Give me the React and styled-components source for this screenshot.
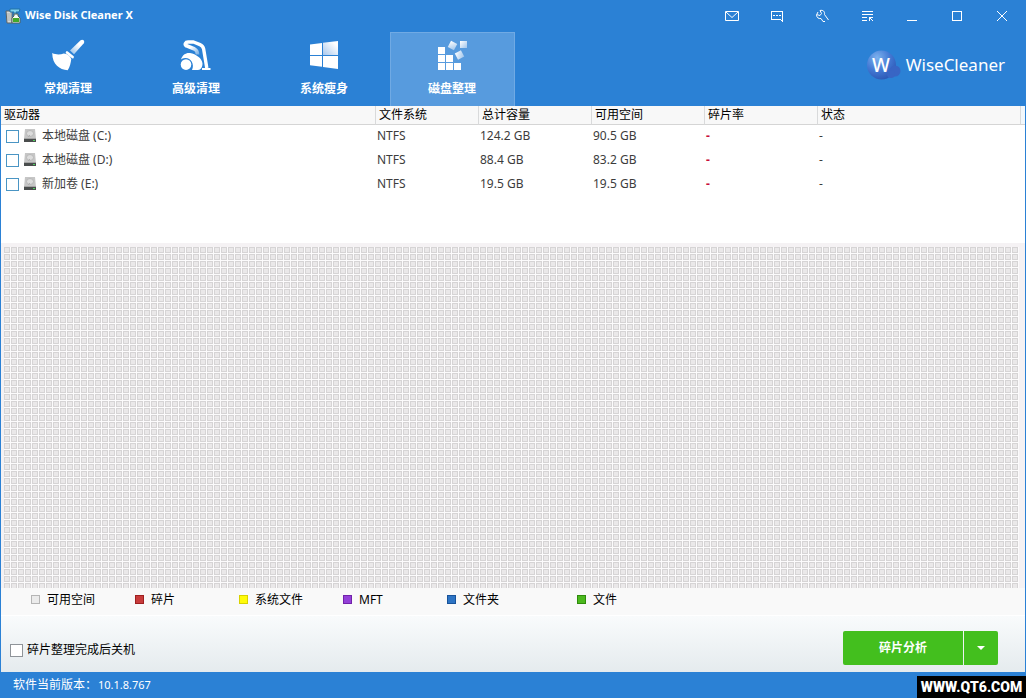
import React, { useState } from "react";
import styled, { createGlobalStyle, css } from "styled-components";

const GlobalStyle = createGlobalStyle`
  *,
  *::before {
    box-sizing: border-box;
  }

  body {
    margin: 0;
    font-family: "Noto Sans", "Noto Sans CJK SC", sans-serif;
    font-size: 12px;
    line-height: 18px;
    color: #000;
  }

  button,
  input {
    font: inherit;
    margin: 0;
  }
`;

const Window = styled.div`
  display: flex;
  flex-direction: column;
  min-height: 100vh;
  background: #2b81d5;
`;

const TitleBar = styled.header`
  display: flex;
  align-items: center;
  height: 32px;
  padding: 0 2px 0 5px;
  color: #fff;
`;

const Title = styled.h1`
  flex: 1;
  margin: 0 0 2px 4px;
  font-size: 11px;
  font-weight: 700;
`;

const TitleButton = styled.button`
  display: flex;
  align-items: center;
  justify-content: center;
  width: 45px;
  height: 32px;
  padding: 0;
  border: 0;
  background: transparent;
`;

const LineIcon = styled.svg`
  width: 16px;
  height: 16px;
  fill: none;
  stroke: #fff;
  shape-rendering: ${(props) => (props.$smooth ? "auto" : "crispEdges")};
`;

const NavBar = styled.nav`
  display: flex;
  gap: 3px;
  height: 74px;
  padding: 0 21px 0 6px;
`;

const NavButton = styled.button`
  display: flex;
  flex-direction: column;
  align-items: center;
  gap: 8px;
  width: 125px;
  padding: 5px 1px 0 0;
  border: 1px solid transparent;
  border-bottom: 0;
  background: transparent;
  color: #fff;
  font-weight: 700;

  svg {
    width: 34px;
    height: 34px;
    fill: #fff;
  }

  ${(props) =>
    props.$active &&
    css`
      background: #579bde;
      border-color: #70aae4;
    `}
`;

const Brand = styled.a`
  display: flex;
  align-items: center;
  gap: 4px;
  height: 66px;
  margin-left: auto;
  color: #fff;
  font-size: 17px;
  text-decoration: none;
`;

const Content = styled.main`
  display: flex;
  flex: 1;
  flex-direction: column;
  margin: 0 1px;
  background: #f9f9f9;
`;

const DriveList = styled.div`
  min-height: 137px;
  background: #fff;
`;

const DriveTable = styled.table`
  width: 100%;
  table-layout: fixed;
  border-collapse: separate;
  border-spacing: 0;
`;

const HeadCell = styled.th`
  width: ${(props) => props.$width || "auto"};
  height: 19px;
  padding: 0 3px;
  border-right: 1px solid #d9dadb;
  border-bottom: 1px solid #d5d5d5;
  background: #f8f8f8;
  font-weight: 400;
  text-align: left;

  &:last-child {
    padding: 0;
    border-right: 0;
    background: #f2f8fc;
  }
`;

const Cell = styled.td`
  height: 24px;
  padding: 0 1px 2px;
  color: ${(props) => (props.$alert ? "#c8103c" : "#3c3c3c")};
  font-weight: ${(props) => (props.$alert ? 700 : 400)};
`;

const DriveLabel = styled.label`
  display: flex;
  align-items: center;
  gap: 5px;
  padding-left: 4px;
`;

const CheckBox = styled.input`
  appearance: none;
  flex: none;
  width: 13px;
  height: 13px;
  border: 1px solid ${(props) => props.$tone || "#4a95c4"};
  background: #fff;

  &:checked {
    background: #2b81d5;
    box-shadow: inset 0 0 0 2px #fff;
  }
`;

const MapArea = styled.section`
  display: flex;
  flex: 1;
  padding: 4px 6px 0 3px;
  background: #f5f2f4;
`;

const ClusterMap = styled.div`
  flex: 1;
  background-color: #eae8e9;
  background-image: linear-gradient(to right, transparent 6px, #fcfbfc 6px),
    linear-gradient(to bottom, transparent 6px, #fcfbfc 6px),
    linear-gradient(
      to right,
      #d6d4d5 1px,
      transparent 1px,
      transparent 5px,
      #d6d4d5 5px
    ),
    linear-gradient(
      to bottom,
      #d6d4d5 1px,
      transparent 1px,
      transparent 5px,
      #d6d4d5 5px
    );
  background-size: 7px 7px;
`;

const Legend = styled.ul`
  display: flex;
  height: 27px;
  margin: 0;
  padding: 3px 0 0 30px;
  list-style: none;
`;

const LegendItem = styled.li`
  display: flex;
  gap: 7px;
  width: ${(props) => (props.$wide ? "130px" : "104px")};

  &::before {
    content: "";
    width: 9px;
    height: 9px;
    margin-top: 4px;
    border: 1px solid ${(props) => props.$edge};
    background: ${(props) => props.$fill};
  }
`;

const Footer = styled.footer`
  display: flex;
  align-items: center;
  justify-content: space-between;
  height: 57px;
  padding: 8px 27px 0 9px;
  border-top: 1px solid #fff;
  background: linear-gradient(#f9fbfc, #e5ebee);
`;

const OptionLabel = styled.label`
  display: flex;
  align-items: center;
  gap: 4px;
  margin-top: 4px;
`;

const ActionGroup = styled.div`
  display: flex;
  gap: 1px;
`;

const ActionButton = styled.button`
  display: flex;
  align-items: center;
  justify-content: center;
  width: ${(props) => (props.$narrow ? "34px" : "120px")};
  height: 34px;
  padding: 0;
  border: 0;
  border-radius: ${(props) => (props.$narrow ? "0 2px 2px 0" : "2px 0 0 2px")};
  background: #43bf1e;
  color: #fff;
  font-weight: 700;
`;

const StatusBar = styled.div`
  position: relative;
  display: flex;
  align-items: center;
  height: 26px;
  padding-left: 13px;
  color: #fff;
`;

const Version = styled.span`
  margin-left: 1px;
  font-size: 11px;
`;

const Watermark = styled.span`
  position: absolute;
  right: 0;
  bottom: 0;
  width: 109px;
  height: 22px;
  background: #000;
  font-family: Roboto, sans-serif;
  font-size: 14px;
  font-weight: 900;
  line-height: 22px;
  text-align: center;
`;

const AppIcon = () => (
  <svg width="16" height="16" viewBox="0 0 16 16">
    <path d="M1 3h6v12H2z" fill="#d6d9d8" stroke="#5c6467" />
    <path d="M3 5v8M5 5v8" stroke="#aab0ae" />
    <path d="M5 1h10l-1 3h-3v3H9V4H5z" fill="#7fd2ee" stroke="#2373a5" />
    <path d="M9 6h4v2l2 2v5H7v-5l2-2z" fill="#f4fbf1" stroke="#53635b" />
    <path d="M8 10h6v4H8z" fill="#42a829" />
  </svg>
);

const BroomIcon = () => (
  <svg viewBox="0 0 34 34">
    <defs>
      <linearGradient id="handle" x1="1" y1="0" x2="0" y2="1">
        <stop offset="0.35" stopColor="#fff" />
        <stop offset="1" stopColor="#8fbdea" />
      </linearGradient>
    </defs>
    <path
      d="M29.6 2.200c2.200-1.600 4.600.6 3.200 3L23 16.200l-4-3.700z"
      fill="url(#handle)"
    />
    <path d="M16 14.500l5.600 4.600" stroke="#fff" strokeWidth="2.6" strokeLinecap="round" />
    <path d="M1.200 15c4 2 8 1.700 11.600.5 3.600.4 6.500 2.600 7.500 5.400-.6 4-1.400 8-3.600 11.300C8.500 31.500 1.500 27 1.200 15z" />
  </svg>
);

const VacuumIcon = () => (
  <svg viewBox="0 0 34 34">
    <defs>
      <linearGradient id="hose" x1="0" y1="0" x2="1" y2="1">
        <stop offset="0.3" stopColor="#fff" />
        <stop offset="1" stopColor="#7db2e6" />
      </linearGradient>
    </defs>
    <path
      d="M7 7.500l8.500 3.500q3 1.500 3 5.500"
      fill="none"
      stroke="url(#hose)"
      strokeWidth="3.6"
    />
    <path
      d="M7.500 8C5 6.500 6.500 4 9 4h5.500l6.500 2.600q3 1.200 3.600 4.200L27.800 30"
      fill="none"
      stroke="#fff"
      strokeWidth="3.4"
      strokeLinejoin="round"
    />
    <path d="M23 30h8.500v2H23z" />
    <path d="M2 21.500C3.500 16.500 7 14.500 11 15c6 1.200 12 5 12.500 10.500 0 3.500-1.500 6.500-4.500 6.500h-6c3-6-1.500-12.500-7-12-2 .2-3 .8-4 1.500z" />
    <circle cx="7" cy="26.600" r="5.300" />
  </svg>
);

const WindowsIcon = () => (
  <svg viewBox="0 0 34 34">
    <defs>
      <linearGradient id="pane" x1="1" y1="0" x2="0" y2="1">
        <stop offset="0.2" stopColor="#fff" />
        <stop offset="1" stopColor="#a9c8ed" />
      </linearGradient>
    </defs>
    <path d="M3 6.600L15 5v12H3z" />
    <path d="M16 4.800L31 3v14H16z" fill="url(#pane)" />
    <path d="M3 18h12v10.800L3 27.200zM16 18h15v13l-15-2z" />
  </svg>
);

const DefragIcon = () => (
  <svg viewBox="0 0 34 34">
    <defs>
      <linearGradient id="block" x1="0" y1="0" x2="1" y2="1">
        <stop offset="0" stopColor="#fff" />
        <stop offset="1" stopColor="#9fc5ec" />
      </linearGradient>
    </defs>
    <path d="M3 9h7v7H3zM3 17h7v7H3zM11 17h7v7h-7zM3 25h7v7H3zM11 25h7v7h-7zM19 25h7v7h-7z" />
    <g fill="url(#block)">
      <path d="M25 3h7v7h-7z" />
      <path d="M14 4h7v7h-7z" transform="rotate(28 17.500 7.500)" />
      <path d="M21 13.500h7v7h-7z" transform="rotate(-28 24.500 17)" />
    </g>
  </svg>
);

const BrandIcon = () => (
  <svg width="36" height="32" viewBox="0 0 36 32">
    <defs>
      <radialGradient id="ball" cx="0.350" cy="0.250" r="0.800">
        <stop offset="0" stopColor="#7cb2ee" />
        <stop offset="0.550" stopColor="#4379d4" />
        <stop offset="1" stopColor="#2b57b4" />
      </radialGradient>
    </defs>
    <circle cx="15.500" cy="16" r="14.500" fill="url(#ball)" />
    <circle cx="29" cy="22" r="5.500" fill="#3865c4" />
    <circle cx="25" cy="25" r="4" fill="#3865c4" />
    <text
      x="15"
      y="23"
      fill="#fff"
      fontFamily="Noto Sans, sans-serif"
      fontSize="19"
      fontWeight="500"
      textAnchor="middle"
    >
      W
    </text>
  </svg>
);

const DiskIcon = () => (
  <svg width="13" height="14" viewBox="0 0 13 14">
    <path d="M1 0h10l1 10H0z" fill="#c6c6c6" />
    <ellipse cx="6" cy="4.500" rx="3.500" ry="3" fill="#dcdcdc" stroke="#b8b8b8" />
    <path d="M4 8l2-2" stroke="#b0b0b0" />
    <path d="M0 9h12v1H0z" fill="#a5a5a5" />
    <path d="M0 10h12v3H0z" fill="#4a4d4d" />
    <path d="M9 11h2v1H9z" fill="#4fd05e" />
  </svg>
);

const titleButtons = [
  { label: "邮件", path: "M1.500 3.500h13v9h-13zM2 4l6 5.500L14 4", smooth: true },
  {
    label: "反馈",
    path: "M2.500 3.500h11v10l-2-2h-9zM4 7.500h2M7 7.500h2M10 7.500h2",
  },
  {
    label: "工具",
    path: "M6 2.500c3-.8 5 1 4.500 4l4 5.500M6 2.500l1.500 3L6 7.500l-3.500-1c0 3 2 4.500 4.500 4l2 3h2M3 6l1-2",
    smooth: true,
  },
  {
    label: "菜单",
    path: "M3 3.500h11M3 6.500h11M3 9.500h5M3 12.500h5M10 9.500h4M10.500 9v4M11 10l3 3",
  },
  { label: "最小化", path: "M3 12.500h10" },
  { label: "最大化", path: "M3.500 3.500h9v9h-9z" },
  { label: "关闭", path: "M3 3l10 10M13 3L3 13", smooth: true },
];

const tabs = [
  { label: "常规清理", Icon: BroomIcon },
  { label: "高级清理", Icon: VacuumIcon },
  { label: "系统瘦身", Icon: WindowsIcon },
  { label: "磁盘整理", Icon: DefragIcon },
];

const drives = [
  { name: "本地磁盘 (C:)", total: "124.2 GB", free: "90.5 GB" },
  { name: "本地磁盘 (D:)", total: "88.4 GB", free: "83.2 GB" },
  { name: "新加卷 (E:)", total: "19.5 GB", free: "19.5 GB" },
];

const legend = [
  { label: "可用空间", fill: "#ebebeb", edge: "#b5b5b5" },
  { label: "碎片", fill: "#c83c3c", edge: "#9e2020" },
  { label: "系统文件", fill: "#fffb0a", edge: "#d8d200" },
  { label: "MFT", fill: "#9440d8", edge: "#7222aa" },
  { label: "文件夹", fill: "#2d74c4", edge: "#18539a", wide: true },
  { label: "文件", fill: "#4cb91e", edge: "#2f8c0c" },
];

export default function App() {
  const [active, setActive] = useState("磁盘整理");

  return (
    <Window>
      <GlobalStyle />
      <TitleBar>
        <AppIcon />
        <Title>Wise Disk Cleaner X</Title>
        {titleButtons.map(({ label, path, smooth }) => (
          <TitleButton key={label} type="button" aria-label={label}>
            <LineIcon viewBox="0 0 16 16" $smooth={smooth}>
              <path d={path} />
            </LineIcon>
          </TitleButton>
        ))}
      </TitleBar>

      <NavBar>
        {tabs.map(({ label, Icon }) => (
          <NavButton
            key={label}
            type="button"
            $active={label === active}
            onClick={() => setActive(label)}
          >
            <Icon />
            {label}
          </NavButton>
        ))}
        <Brand href="#">
          <BrandIcon />
          WiseCleaner
        </Brand>
      </NavBar>

      <Content>
        <DriveList>
          <DriveTable>
            <thead>
              <tr>
                <HeadCell>驱动器</HeadCell>
                <HeadCell $width="103px">文件系统</HeadCell>
                <HeadCell $width="113px">总计容量</HeadCell>
                <HeadCell $width="113px">可用空间</HeadCell>
                <HeadCell $width="113px">碎片率</HeadCell>
                <HeadCell $width="203px">状态</HeadCell>
                <HeadCell $width="4px" />
              </tr>
            </thead>
            <tbody>
              {drives.map((drive) => (
                <tr key={drive.name}>
                  <Cell>
                    <DriveLabel>
                      <CheckBox type="checkbox" />
                      <DiskIcon />
                      {drive.name}
                    </DriveLabel>
                  </Cell>
                  <Cell>NTFS</Cell>
                  <Cell>{drive.total}</Cell>
                  <Cell>{drive.free}</Cell>
                  <Cell $alert>-</Cell>
                  <Cell>-</Cell>
                </tr>
              ))}
            </tbody>
          </DriveTable>
        </DriveList>

        <MapArea>
          <ClusterMap />
        </MapArea>

        <Legend>
          {legend.map(({ label, fill, edge, wide }) => (
            <LegendItem key={label} $fill={fill} $edge={edge} $wide={wide}>
              {label}
            </LegendItem>
          ))}
        </Legend>

        <Footer>
          <OptionLabel>
            <CheckBox type="checkbox" $tone="#8f9499" />
            碎片整理完成后关机
          </OptionLabel>
          <ActionGroup>
            <ActionButton type="button">碎片分析</ActionButton>
            <ActionButton type="button" $narrow aria-label="更多">
              <svg width="8" height="4" viewBox="0 0 8 4" fill="#fff">
                <path d="M0 0h8L4 4z" />
              </svg>
            </ActionButton>
          </ActionGroup>
        </Footer>
      </Content>

      <StatusBar>
        软件当前版本：<Version>10.1.8.767</Version>
        <Watermark>WWW.QT6.COM</Watermark>
      </StatusBar>
    </Window>
  );
}
